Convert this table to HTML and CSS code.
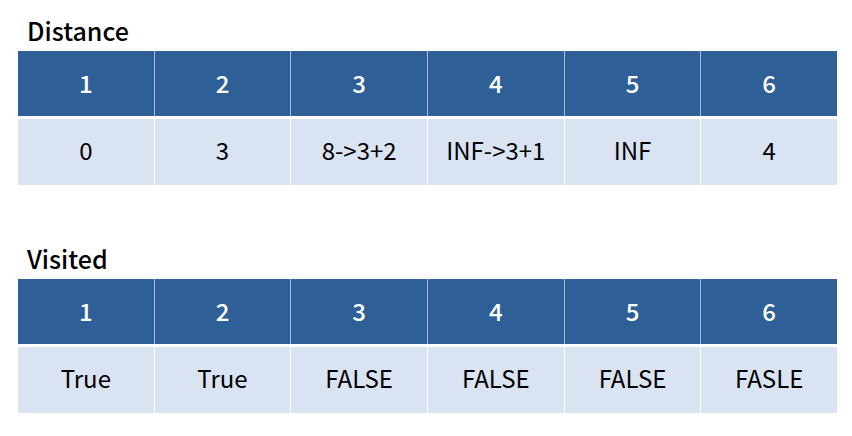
FILE: index.html
```html
<!DOCTYPE html>
<html>
<head>
<meta charset="utf-8">
<link rel="stylesheet" href="styles.css">
</head>
<body>
<div class="page">
  <section class="block">
    <h2 class="title">Distance</h2>
    <div class="table">
      <div class="row head">
        <div class="cell">1</div><div class="cell">2</div><div class="cell">3</div>
        <div class="cell">4</div><div class="cell">5</div><div class="cell">6</div>
      </div>
      <div class="row body">
        <div class="cell">0</div><div class="cell">3</div><div class="cell">8-&gt;3+2</div>
        <div class="cell">INF-&gt;3+1</div><div class="cell">INF</div><div class="cell">4</div>
      </div>
    </div>
  </section>
  <section class="block second">
    <h2 class="title">Visited</h2>
    <div class="table">
      <div class="row head">
        <div class="cell">1</div><div class="cell">2</div><div class="cell">3</div>
        <div class="cell">4</div><div class="cell">5</div><div class="cell">6</div>
      </div>
      <div class="row body">
        <div class="cell">True</div><div class="cell">True</div><div class="cell">FALSE</div>
        <div class="cell">FALSE</div><div class="cell">FALSE</div><div class="cell">FASLE</div>
      </div>
    </div>
  </section>
</div>
</body>
</html>
```
FILE: styles.css
```css
html, body {
  margin: 0;
  padding: 0;
  background: #ffffff;
}
body {
  font-family: "Noto Sans CJK KR", "Noto Sans", sans-serif;
  color: #000;
}
.page {
  padding: 14px 15px 0 18px;
}
.block.second {
  margin-top: 57px;
}
.title {
  margin: 0 0 0 9px;
  font-size: 25px;
  font-weight: 500;
  line-height: 33px;
  height: 37px;
}
.table {
  width: 819px;
  display: flex;
  flex-direction: column;
  gap: 3px;
}
.row {
  display: grid;
  grid-template-columns: repeat(6, 1fr);
  column-gap: 1px;
}
.row.head {
  background: #a9bad2;
  height: 65px;
}
.row.body {
  background: #ffffff;
  height: 66px;
}
.cell {
  display: flex;
  align-items: center;
  justify-content: center;
}
.head .cell {
  background: #2f5f97;
  color: #ffffff;
  font-weight: 500;
  font-size: 24px;
  padding-bottom: 2px;
}
.body .cell {
  background: #d9e3f2;
  font-size: 24px;
  padding-bottom: 6px;
}
```
